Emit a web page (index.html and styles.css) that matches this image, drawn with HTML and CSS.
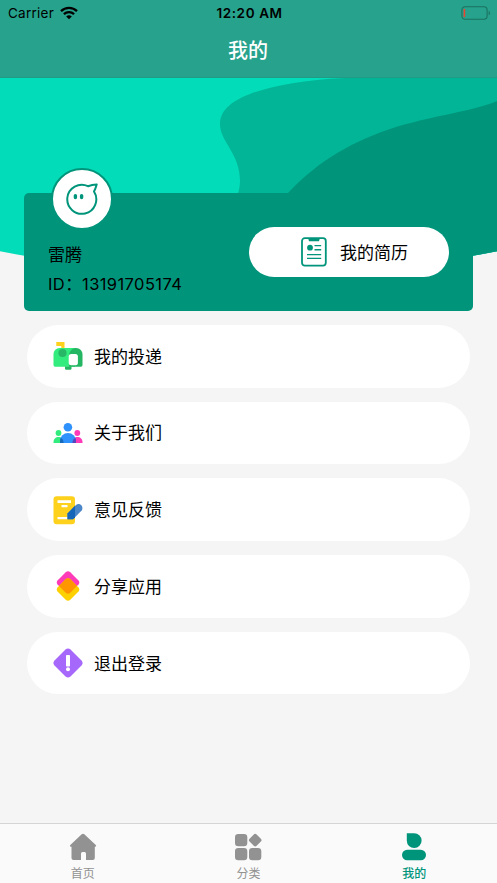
FILE: index.html
```html
<!DOCTYPE html>
<html lang="zh-CN">
<head>
<meta charset="utf-8">
<meta name="viewport" content="width=device-width, initial-scale=1">
<title>我的</title>
<link rel="stylesheet" href="styles.css">
</head>
<body>
<div class="app">
  <header class="header">
    <div class="status">
      <div class="status-left">
        <span class="carrier">Carrier</span>
        <svg class="wifi" viewBox="0 0 18 14" width="18" height="14">
          <path d="M1 5.1C5.5.8 12.5.8 17 5.1M3.9 8.1c2.9-2.7 7.3-2.7 10.2 0" fill="none" stroke="#000" stroke-width="2.3"/>
          <path d="M6.2 10.5a4.1 4.1 0 0 1 5.6 0L9 13.3z"/>
        </svg>
      </div>
      <span class="time">12:20 AM</span>
      <svg class="battery" viewBox="0 0 30 14" width="30" height="14">
        <rect x=".9" y=".8" width="25.2" height="12.4" rx="3.2" fill="none" stroke="#1b705f" stroke-width="1.1"/>
        <path d="M27.7 4.7c1.8.8 1.8 3.8 0 4.6z" fill="#1b705f"/>
        <rect x="2.6" y="2.7" width="1.6" height="8.6" rx=".8" fill="#e8442f"/>
      </svg>
    </div>
    <h1 class="title">我的</h1>
  </header>

  <main class="content">
    <svg class="hero" viewBox="0 78 497 202" width="497" height="202">
      <clipPath id="arc"><path d="M0 78H497V251.3Q248.500 300 0 251.300Z"/></clipPath>
      <g clip-path="url(#arc)">
        <path fill="#02dcb8" d="M0 78h497v202H0z"/>
        <path fill="#02b597" d="M345 78C303 80 271 86 250 94C229 102 220 112 220 124C220 142 240 153 240 181Q240 190 235 202V280H497V78Z"/>
        <path fill="#00957b" d="M280 202C309 168 340 148 380 132.500C422 116.500 473 112 497 101V280H280Z"/>
      </g>
    </svg>

    <section class="profile">
      <div class="person">
        <div class="avatar">
          <svg viewBox="0 0 34 34" width="34" height="34" fill="none" stroke="#00957b" stroke-width="2" stroke-linecap="round" stroke-linejoin="round">
            <path d="M23 4.200A14.500 14.500 0 1 0 29 9.500Q30.600 6.500 31.700 2.500Q27 2.600 23 4.200"/>
            <path d="M10.400 13.600v2M16.600 13.600v2" stroke-width="3.400"/>
          </svg>
        </div>
        <div class="name">雷腾</div>
        <div class="uid">ID：13191705174</div>
      </div>
      <a class="resume">
        <svg viewBox="0 0 26 30" width="26" height="30" fill="none" stroke="#00957b" stroke-width="1.8">
          <rect x="1" y="1.200" width="23.800" height="27.400" rx="2.800"/>
          <path fill="#00957b" stroke="none" d="M7 1h12l-1 3.200H8z"/>
          <circle cx="9" cy="10.700" r="2.900" fill="#00957b" stroke="none"/>
          <path d="M13.500 8.600h6.700M13.500 12.800h6.700M6 17.600h14.200M6 21.400h14.200" stroke-width="1.400"/>
        </svg>
        <span>我的简历</span>
      </a>
    </section>

    <nav class="menu">
      <a class="row">
        <svg class="icon" viewBox="0 0 30 30">
          <path fill="#fdd11c" d="M3.300 1h8.200v9H8.300V5H3.300z"/>
          <path fill="#32ed7d" d="M6.500 7H22v18.700H2Q.5 25.700.5 24V13A6 6 0 0 1 6.500 7z"/>
          <path fill="#25b663" d="M16 13.500C17 9 20 7 23 7c4 0 6.500 3 6.500 6.500V24q0 1.700-1.500 1.700H16z"/>
          <circle cx="9.500" cy="12" r="4.100" fill="#28b766"/>
          <path fill="#25b663" d="M12 25.500h6.500v2q0 1.300-1.300 1.300h-4Q12 28.800 12 27.500z"/>
          <rect x="15.700" y="13" width="9.200" height="11.300" rx="2.500" fill="#fff"/>
        </svg>
        <span>我的投递</span>
      </a>
      <a class="row">
        <svg class="icon" viewBox="0 0 30 30">
          <circle cx="5.500" cy="15" r="2.900" fill="#32ed7d"/>
          <circle cx="24.300" cy="15" r="2.900" fill="#fd3bb8"/>
          <path fill="#32ed7d" d="M.5 25v-1c0-3 2.300-5 5-5s5 2 5 5v1z"/>
          <path fill="#fd3bb8" d="M19.500 25v-1c0-3 2.300-5 5-5s5 2 5 5v1z"/>
          <circle cx="14.900" cy="9.300" r="4.300" fill="#2f91fb"/>
          <path fill="#2f91fb" d="M7 25v-2a8 8 0 0 1 16 0v2z"/>
          <path fill="#176aba" d="M7 25v-2q0-1.800.8-3.200 2.700 1.200 2.700 4.200v1z"/>
          <path fill="#5745bd" d="M23 25v-2q0-1.800-.8-3.200-2.700 1.200-2.700 4.200v1z"/>
        </svg>
        <span>关于我们</span>
      </a>
      <a class="row">
        <svg class="icon" viewBox="0 0 30 30">
          <rect x=".5" y="1.200" width="21.500" height="28" rx="3.200" fill="#fdd11c"/>
          <path fill="#fff" d="M4.500 5.300H18V8H4.500zM8.500 10h6v2.300h-6zM4.500 22h10v2.300h-10z"/>
          <path fill="#4a86c8" d="m14.500 18.500 8.200-8.300c4-3.300 8.500 1.200 6 5.200L20 24.200h-5.500z"/>
          <path fill="#1565b9" d="M14.500 18.500 22 10.800v11.400l-2 2h-5.500z"/>
        </svg>
        <span>意见反馈</span>
      </a>
      <a class="row">
        <svg class="icon" viewBox="0 0 30 30">
          <path fill="#fd3bb8" d="M17.300 1.300 25.500 9.500Q27 11.500 25.500 13.500L17.300 21.700Q15 23.700 12.700 21.700L4.500 13.500Q3 11.500 4.500 9.500L12.700 1.300Q15-.7 17.300 1.300z"/>
          <path fill="#fdd000" d="M17.300 8.300 25.500 16.500Q27 18.500 25.500 20.500L17.300 28.700Q15 30.700 12.700 28.700L4.500 20.500Q3 18.500 4.500 16.500L12.700 8.300Q15 6.300 17.300 8.300z"/>
          <path fill="#ff9600" d="m17.300 8.300 6.700 6.700-6.700 6.700q-2.300 2-4.600 0L6 15l6.700-6.700q2.300-2 4.600 0z"/>
        </svg>
        <span>分享应用</span>
      </a>
      <a class="row">
        <svg class="icon" viewBox="0 0 30 30">
          <path fill="#a668fa" d="m17.500 1.500 11 11q2.200 2.500 0 5l-11 11q-2.500 2.200-5 0l-11-11q-2.200-2.500 0-5l11-11q2.500-2.200 5 0z"/>
          <rect x="13" y="7" width="4" height="11.500" rx=".7" fill="#fff"/>
          <circle cx="15" cy="21.200" r="2" fill="#fff"/>
        </svg>
        <span>退出登录</span>
      </a>
    </nav>
  </main>

  <footer class="tabs">
    <a class="tab">
      <svg viewBox="0 0 28 28" width="28" height="28"><path d="M12.700 1.300Q14 .3 15.300 1.300L26.800 12q1 1.400-.4 1.700h-.6V25q0 2-2 2H17v-6.500q0-1.500-1.500-1.500h-2Q12 19 12 20.500V27H4.500q-2 0-2-2V13.700h-.7Q.3 13.500 1.300 12z"/></svg>
      <span>首页</span>
    </a>
    <a class="tab">
      <svg viewBox="0 0 28 28" width="28" height="28">
        <rect x="1" y="1" width="12.300" height="12.300" rx="3.300"/>
        <rect x="1" y="14.900" width="12.300" height="12.300" rx="3.300"/>
        <rect x="15" y="14.900" width="12.300" height="12.300" rx="3.300"/>
        <rect x="16.200" y="2.200" width="10" height="10" rx="2" transform="rotate(45 21.200 7.200)"/>
      </svg>
      <span>分类</span>
    </a>
    <a class="tab active">
      <svg viewBox="0 0 28 28" width="28" height="28">
        <path d="M6.800.3H14a7.400 7.400 0 1 1-7.200 7.400z"/>
        <rect x="2" y="16.700" width="24" height="10.500" rx="5.200"/>
      </svg>
      <span>我的</span>
    </a>
  </footer>
</div>
</body>
</html>
```
FILE: styles.css
```css
* {
  box-sizing: border-box;
}

body {
  margin: 0;
  background: #f5f5f5;
  color: #000;
  font-family: Inter, "Noto Sans CJK SC", sans-serif;
}

svg {
  display: block;
  flex: none;
}

.app {
  display: flex;
  flex-direction: column;
  width: 497px;
  height: 883px;
  overflow: hidden;
}

.header {
  flex: none;
  height: 78px;
  background: #27a38d;
  border-bottom: 1px solid #1f9a84;
}

.status {
  display: grid;
  grid-template-columns: 1fr auto 1fr;
  align-items: center;
  height: 26px;
  padding: 0 6px 0 8px;
}

.status-left {
  display: flex;
  align-items: center;
  gap: 6px;
}

.carrier {
  font-size: 13.5px;
  letter-spacing: 0.25px;
}

.time {
  font-size: 13.5px;
  font-weight: 600;
  letter-spacing: 0.6px;
}

.battery {
  justify-self: end;
}

.title {
  margin: 0;
  height: 50px;
  padding-right: 1px;
  color: #fff;
  font-size: 20px;
  font-weight: 500;
  line-height: 51px;
  text-align: center;
}

.content {
  position: relative;
  flex: 1;
  padding: 115px 24px 0;
}

.hero {
  position: absolute;
  top: 0;
  left: 0;
}

.profile {
  position: relative;
  display: flex;
  justify-content: space-between;
  height: 118px;
  padding: 0 24px;
  border-radius: 5px;
  background: #00957b;
}

.avatar {
  display: grid;
  place-items: center;
  width: 62px;
  height: 62px;
  margin: -25px 0 0 3px;
  border: 2px solid #00957b;
  border-radius: 50%;
  background: #fff;
}

.name {
  margin-top: 11px;
  font-size: 17px;
  line-height: 29px;
}

.uid {
  font-size: 16.500px;
  letter-spacing: 0.4px;
  line-height: 29px;
  white-space: nowrap;
}

.resume {
  display: flex;
  align-items: center;
  width: 200px;
  height: 50px;
  margin-top: 34px;
  padding-left: 52px;
  gap: 13px;
  border-radius: 25px;
  background: #fff;
  font-size: 17px;
}

.resume span,
.row span {
  padding-bottom: 2px;
}

.menu {
  display: flex;
  flex-direction: column;
  gap: 14.200px;
  margin-top: 14px;
  padding: 0 3px;
}

.row {
  display: flex;
  align-items: center;
  height: 62.500px;
  padding-left: 25.500px;
  gap: 11.500px;
  border-radius: 32px;
  background: #fff;
  font-size: 17px;
}

.icon {
  width: 30px;
  height: 30px;
}

.tabs {
  display: grid;
  grid-template-columns: repeat(3, 1fr);
  flex: none;
  height: 60px;
  border-top: 1px solid #d5d5d5;
  background: #fafafa;
}

.tab {
  display: flex;
  flex-direction: column;
  align-items: center;
  padding-top: 9px;
  color: #929292;
  font-size: 12px;
  line-height: 26px;
}

.tab svg {
  fill: #929292;
}

.active {
  color: #00957b;
  font-weight: 500;
}

.active svg {
  fill: #00957b;
}
```
